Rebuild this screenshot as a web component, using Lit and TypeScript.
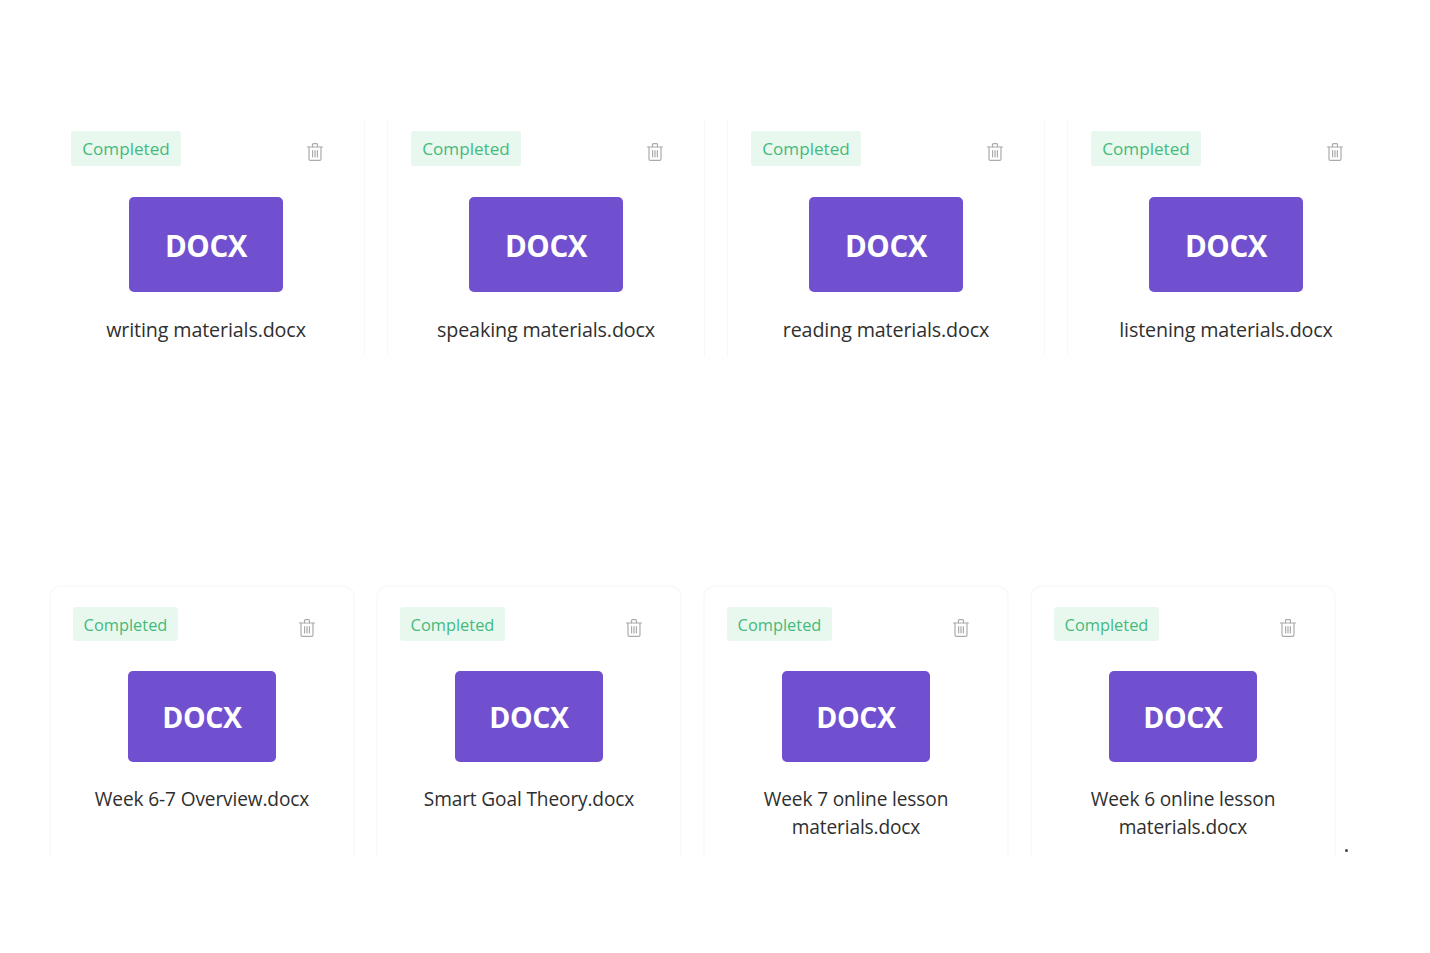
import { LitElement, html, css } from "lit";
import { customElement } from "lit/decorators.js";

const trash = html`<svg viewBox="1 1 16 18.4" fill="none" stroke="currentColor" stroke-width="1.2" stroke-linecap="round" stroke-linejoin="round" aria-hidden="true">
  <path d="M1.5 5h15"/><path d="M6.5 5V2.6c0-.6.4-1 1-1h3c.6 0 1 .4 1 1V5"/>
  <path d="M3 5v12c0 .8.6 1.4 1.4 1.4h9.2c.8 0 1.4-.6 1.4-1.4V5"/>
  <path d="M6.6 8.5v6.5M9 8.5v6.5M11.4 8.5v6.5"/></svg>`;

const rowA = ["writing materials.docx", "speaking materials.docx", "reading materials.docx", "listening materials.docx"];
const rowB = ["Week 6-7 Overview.docx", "Smart Goal Theory.docx", "Week 7 online lesson materials.docx", "Week 6 online lesson materials.docx"];

@customElement("app-root")
export class AppRoot extends LitElement {
  static styles = css`
    :host {
      display: block;
      position: relative;
      height: 953px;
      overflow: hidden;
      background: #fff;
      font-family: "Open Sans", "Noto Sans", "Liberation Sans", sans-serif;
      color: #333;
    }
    .row { display: grid; grid-template-columns: repeat(4, auto); justify-content: start; }
    .row-a { padding: 120px 0 0 47px; column-gap: 22px; }
    .row-b { padding: 228px 0 0 49px; column-gap: 21px; }
    .card {
      box-sizing: border-box;
      display: flex;
      flex-direction: column;
      background: #fff;
      border: 2px solid #fafafa;
    }
    .row-a .card {
      width: 318px; height: 237px;
      padding: 11px 24px 0;
      border-width: 0 1px;
      border-color: transparent #f8f8f8 transparent transparent;
    }
    .row-a .card + .card { border-left-color: #f8f8f8; }
    .row-a .card:last-child { border-right-color: transparent; }
    .row-b .card {
      width: 306px; height: 272px;
      padding: 20px 22px 0;
      border-bottom: 0;
      border-radius: 12px 12px 0 0;
    }
    .top { display: flex; justify-content: space-between; align-items: flex-start; }
    .badge {
      background: #e9f8ef;
      color: #43ba7b;
      border-radius: 3px;
      white-space: nowrap;
      text-align: center;
      box-sizing: border-box;
    }
    .row-a .badge { width: 110px; height: 35px; line-height: 36px; font-size: 17.1px; margin-left: -1px; }
    .row-b .badge { width: 105px; height: 34px; line-height: 35px; font-size: 16.4px; }
    .del { color: #ababab; display: block; }
    .row-a .del { width: 16px; height: 18px; margin: 12px 17px 0 0; }
    .row-b .del { width: 16px; height: 18px; margin: 12px 16px 0 0; }
    .doc {
      align-self: center;
      display: flex;
      align-items: center;
      justify-content: center;
      background: #7150d0;
      color: #fff;
      font-weight: 700;
      border-radius: 5px;
      letter-spacing: -0.4px;
    }
    .row-a .doc { width: 154px; height: 95px; margin-top: 31px; font-size: 29.5px; padding-top: 1px; box-sizing: border-box; }
    .row-b .doc { width: 148px; height: 91px; margin-top: 30px; font-size: 28.5px; }
    .name { text-align: center; color: #2f2f2f; }
    .row-a .name { margin-top: 23px; font-size: 19.7px; line-height: 30px; letter-spacing: -0.13px; }
    .row-b .name { margin-top: 23px; font-size: 19.1px; line-height: 28px; letter-spacing: -0.13px; padding: 0 30px; }
    .row-b .name.single { padding: 0; }
    .dot { position: absolute; left: 1345px; top: 849px; width: 3px; height: 3px; background: #444; border-radius: 50%; }
  `;

  private card(name: string) {
    const single = name.length < 25;
    return html`<div class="card">
      <div class="top"><span class="badge">Completed</span><span class="del">${trash}</span></div>
      <div class="doc">DOCX</div>
      <div class="name ${single ? "single" : ""}">${name}</div>
    </div>`;
  }

  render() {
    return html`
      <div class="row row-a">${rowA.map((n) => this.card(n))}</div>
      <div class="row row-b">${rowB.map((n) => this.card(n))}</div>
      <div class="dot"></div>
    `;
  }
}
